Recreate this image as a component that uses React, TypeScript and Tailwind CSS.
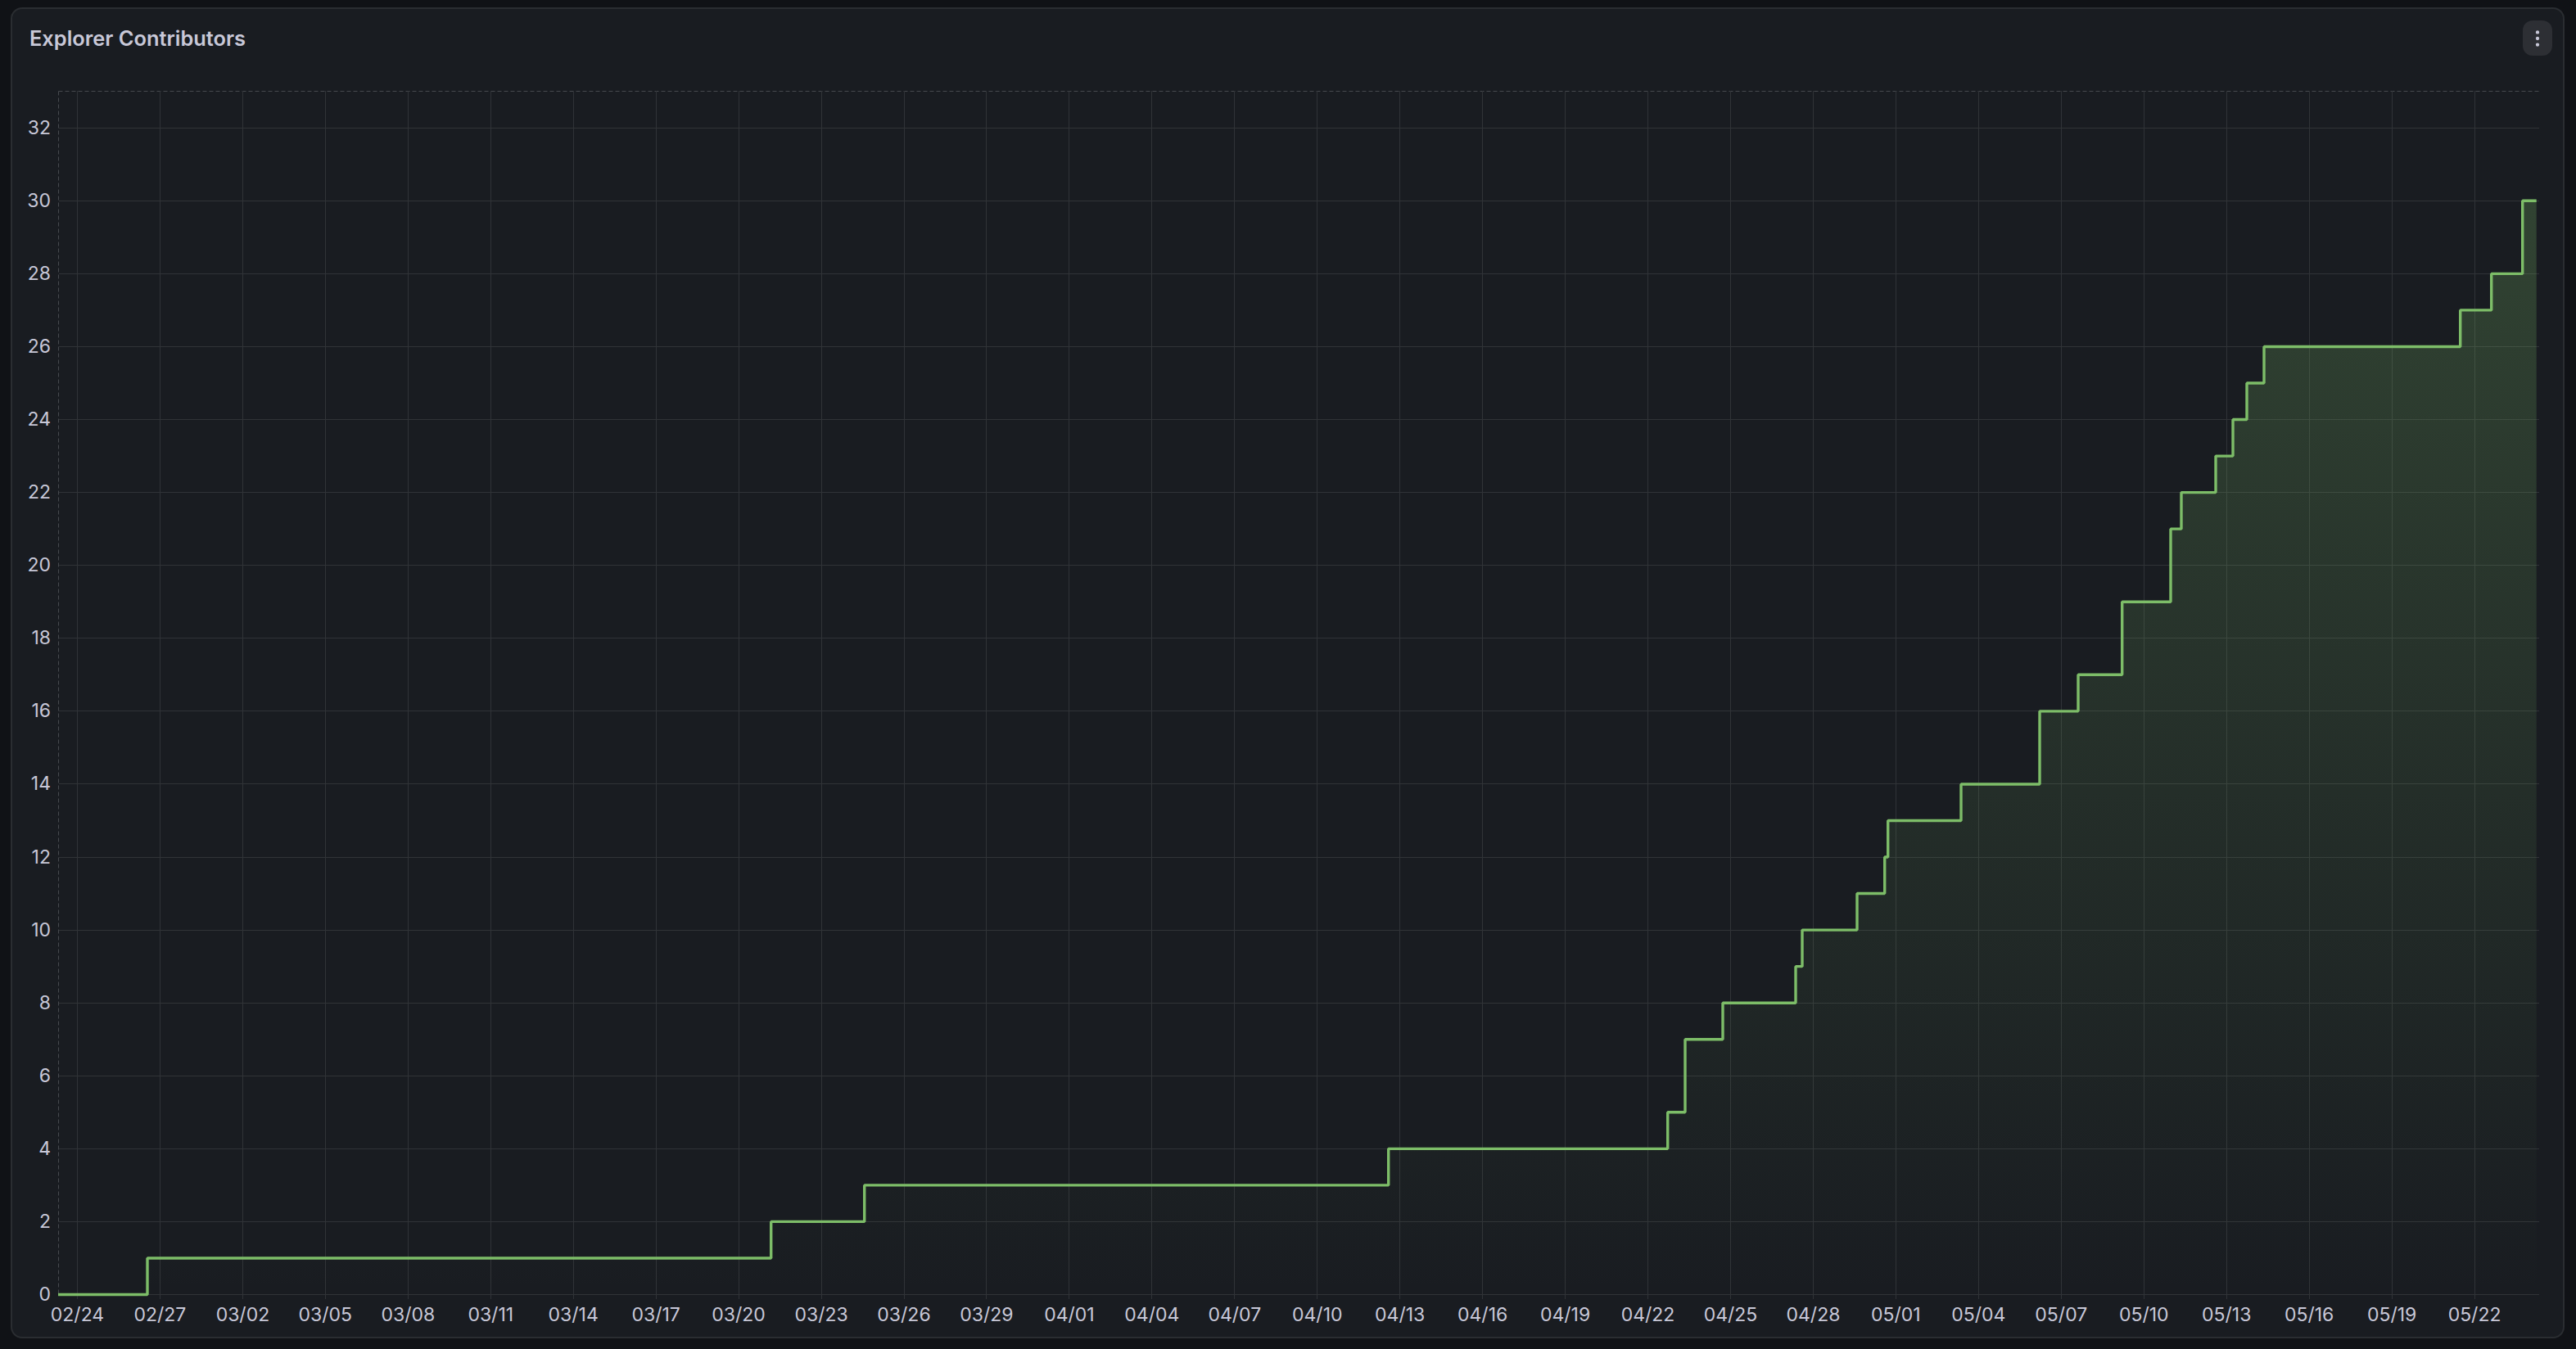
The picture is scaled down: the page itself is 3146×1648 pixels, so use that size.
import { EllipsisVertical } from "lucide-react";

const xLabels = [
  "02/24","02/27","03/02","03/05","03/08","03/11","03/14","03/17","03/20","03/23",
  "03/26","03/29","04/01","04/04","04/07","04/10","04/13","04/16","04/19","04/22",
  "04/25","04/28","05/01","05/04","05/07","05/10","05/13","05/16","05/19","05/22",
];
const yLabels = [0,2,4,6,8,10,12,14,16,18,20,22,24,26,28,30,32];
const X0 = 94.5;
const XS = 100.95;
const Y0 = 1581.5;
const YS = 44.54;
const yAt = (v: number) => Y0 - v * YS;
const gx = (i: number) => Math.round(X0 + i * XS - 0.5) + 0.5;
const gy = (v: number) => Math.round(yAt(v) - 0.5) + 0.5;

const steps: [number, number][] = [
  [180, 1],[941.7, 2],[1055.7, 3],[1695.7, 4],[2036.7, 5],[2058, 7],[2104, 8],[2193, 9],
  [2201, 10],[2268, 11],[2301.7, 12],[2305.7, 13],[2395, 14],[2491, 16],[2538, 17],
  [2591.7, 19],[2651, 21],[2664, 22],[2706, 23],[2727, 24],[2744, 25],[2765, 26],
  [3004.7, 27],[3042.7, 28],[3080.7, 30],
];
const START = 71;
const END = 3097.7;
let line = `M${START} ${yAt(0)}`;
let prev = 0;
for (const [x, v] of steps) {
  line += ` L${x} ${yAt(prev)} L${x} ${yAt(v)}`;
  prev = v;
}
line += ` L${END} ${yAt(prev)}`;
const area = `${line} L${END} ${Y0} L${START} ${Y0} Z`;

const fontStack = "font-['Inter','Liberation_Sans',sans-serif]";

export default function App() {
  return (
    <div className={`w-[3146px] h-[1648px] bg-[#101216] pt-[9px] pl-[13px] pr-[14px] pb-[13px] ${fontStack}`}>
      <div className="flex h-full flex-col rounded-[14px] border-2 border-[#2a2d31] bg-[#191c21]">
        <div className="flex items-center justify-between pt-[14px] pb-[22px] pl-[21px] pr-[13px]">
          <h2 className="text-[25.4px] font-semibold leading-[43px] text-[#c8c8d8]">Explorer Contributors</h2>
          <button className="flex h-[43px] w-[36px] items-center justify-center rounded-[12px] bg-[#2d2f34] text-[#c8c8d8]">
            <EllipsisVertical size={26} strokeWidth={2} />
          </button>
        </div>
        <svg className="block" width={3115} height={1543} viewBox="15 90 3115 1543">
          <defs>
            <linearGradient id="fill" gradientUnits="userSpaceOnUse" x1="0" y1="245" x2="0" y2="1581">
              <stop offset="0" stopColor="#7dbf69" stopOpacity={0.24} />
              <stop offset="1" stopColor="#7dbf69" stopOpacity={0} />
            </linearGradient>
          </defs>
          <path d={`M71.5 111.5 H3101`} stroke="#46494e" strokeWidth={1} strokeDasharray="5 3" fill="none" />
          <path d={`M71.5 111.5 V${Y0}`} stroke="#46494e" strokeWidth={1} strokeDasharray="5 3" fill="none" />
          {yLabels.map((v) => (
            <line key={v} x1={72} x2={3101} y1={gy(v)} y2={gy(v)} stroke="#303337" strokeWidth={1} />
          ))}
          {xLabels.map((_, i) => (
            <line key={i} x1={gx(i)} x2={gx(i)} y1={111} y2={1587} stroke="#303337" strokeWidth={1} />
          ))}
          <path d={area} fill="url(#fill)" />
          <path d={line} fill="none" stroke="#7dbd68" strokeWidth={3.4} strokeLinejoin="bevel" />
          {yLabels.map((v) => (
            <text key={v} x={62} y={yAt(v) + 7.5} textAnchor="end" fontSize={23} fill="#c8c8d8">
              {v}
            </text>
          ))}
          {xLabels.map((l, i) => (
            <text key={l} x={X0 + i * XS} y={1614} textAnchor="middle" fontSize={23} fill="#c8c8d8">
              {l}
            </text>
          ))}
        </svg>
      </div>
    </div>
  );
}
